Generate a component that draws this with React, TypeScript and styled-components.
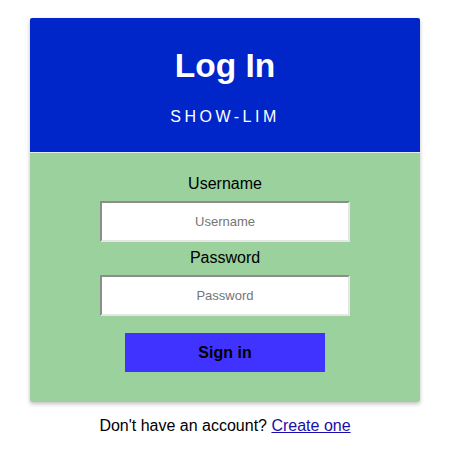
import React from "react";
import styled, { createGlobalStyle } from "styled-components";

const Global = createGlobalStyle`
  html, body { margin: 0; padding: 0; background: #ffffff; }
  body { font-family: "Liberation Sans", Arial, sans-serif; color: #000; }
`;

const Page = styled.div`
  display: flex;
  flex-direction: column;
  align-items: center;
  padding-top: 18px;
`;

const Card = styled.div`
  width: 390px;
  box-shadow: 0 2px 4px rgba(0, 0, 0, 0.25);
  border-radius: 2px;
  overflow: hidden;
`;

const Header = styled.div`
  background: #0026c9;
  color: #ffffff;
  height: 134px;
  display: flex;
  flex-direction: column;
  align-items: center;
  border-bottom: 1px solid #e4ecf4;
`;

const Title = styled.h1`
  margin: 29px 0 0;
  font-size: 33.5px;
  font-weight: bold;
  line-height: 38px;
`;

const Subtitle = styled.div`
  margin-top: 23px;
  font-size: 16px;
  letter-spacing: 3.5px;
  line-height: 18px;
`;

const Body = styled.form`
  background: #9ad19c;
  display: flex;
  flex-direction: column;
  align-items: center;
  padding: 22px 0 30px;
`;

const Label = styled.label`
  font-size: 16px;
  line-height: 18px;
  margin-bottom: 8px;
`;

const Input = styled.input`
  box-sizing: border-box;
  width: 250px;
  height: 41px;
  border: 2px solid #e6e6e6;
  border-top-color: #8c8c8c;
  border-left-color: #8c8c8c;
  background: #ffffff;
  text-align: center;
  font-family: "Liberation Sans", Arial, sans-serif;
  font-size: 13px;
  margin-bottom: ${(p: { $mb: number }) => p.$mb}px;
  &::placeholder { color: #757575; }
`;

const Button = styled.button`
  width: 200px;
  height: 39px;
  margin-top: 17px;
  background: #4133ff;
  border: none;
  font-family: "Liberation Sans", Arial, sans-serif;
  font-size: 16px;
  font-weight: bold;
  color: #000;
`;

const Footer = styled.p`
  margin: 15px 0 0;
  font-size: 16px;
  line-height: 18px;
  text-align: center;
`;

const Link = styled.a`
  color: #1a0dab;
  text-decoration: underline;
`;

export default function App() {
  return (
    <>
      <Global />
      <Page>
        <Card>
          <Header>
            <Title>Log In</Title>
            <Subtitle>SHOW-LIM</Subtitle>
          </Header>
          <Body onSubmit={(e) => e.preventDefault()}>
            <Label htmlFor="u">Username</Label>
            <Input id="u" $mb={7} placeholder="Username" />
            <Label htmlFor="p">Password</Label>
            <Input id="p" $mb={0} type="password" placeholder="Password" />
            <Button type="submit">Sign in</Button>
          </Body>
        </Card>
        <Footer>
          Don't have an account? <Link href="#">Create one</Link>
        </Footer>
      </Page>
    </>
  );
}
